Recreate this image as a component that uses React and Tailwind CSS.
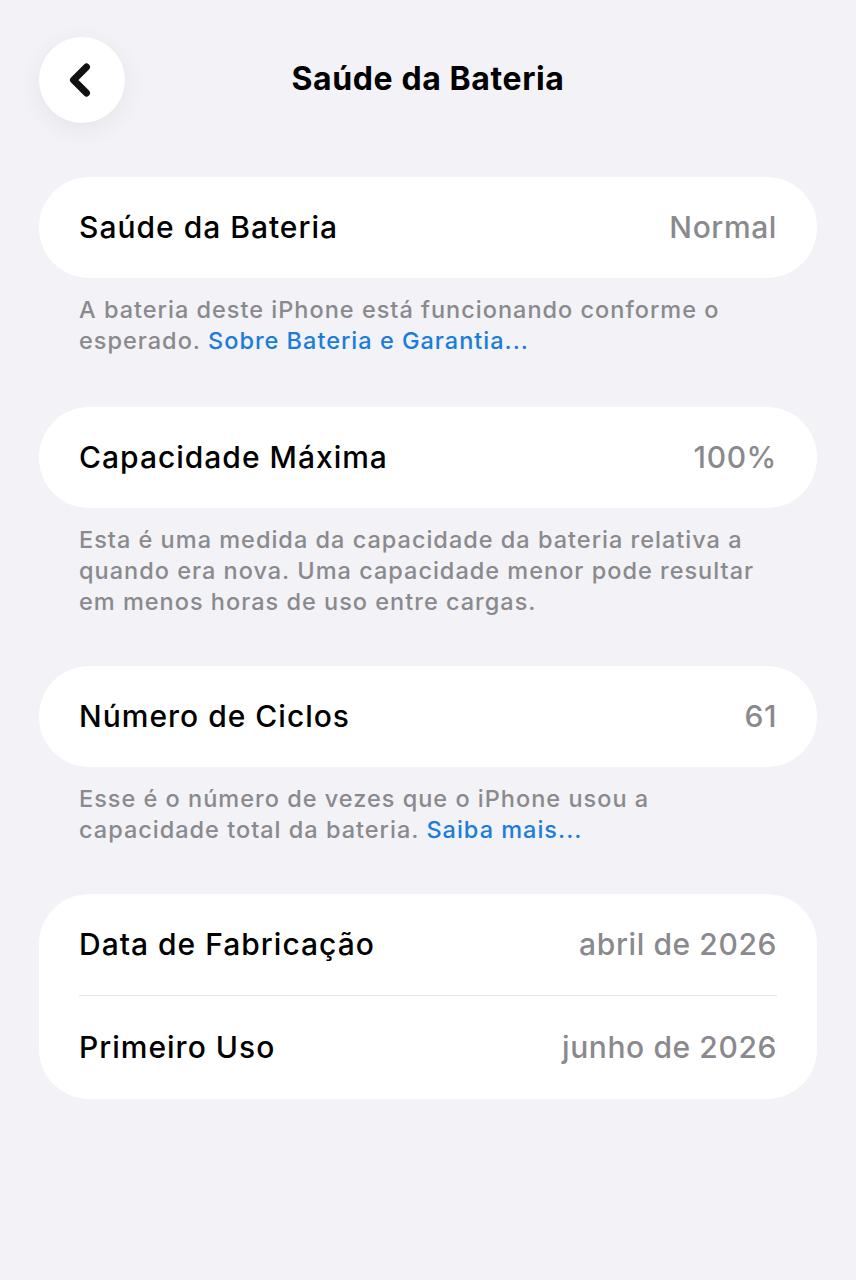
import { ChevronLeft } from 'lucide-react';

function Row({ label, value, tall }) {
  return (
    <div
      className={`flex items-center justify-between px-10 ${tall ? 'h-[103px]' : 'h-[101px]'}`}
    >
      <span className="text-[30px] font-medium tracking-[1px] text-black">{label}</span>
      <span className="text-[30px] font-medium tracking-[0.6px] text-[#8a8a8e]">{value}</span>
    </div>
  );
}

function Footer({ children }) {
  return (
    <p className="mt-4 px-10 text-[23.5px] font-medium leading-[31px] tracking-[1px] text-[#8a8a8e]">
      {children}
    </p>
  );
}

export default function App() {
  return (
    <div
      className="min-h-[1280px] w-full bg-[#f2f2f7]"
      style={{ fontFamily: 'Inter, "Noto Sans", sans-serif' }}
    >
      <div className="relative flex h-[159px] items-center justify-center">
        <button className="absolute left-[39px] top-[37px] flex h-[86px] w-[86px] items-center justify-center rounded-full bg-white shadow-[0_6px_24px_rgba(0,0,0,0.06)]">
          <ChevronLeft size={52} strokeWidth={3.2} className="text-[#111] -ml-1" />
        </button>
        <h1 className="-mt-[1px] text-[32px] font-bold tracking-[0.6px] text-black">
          Saúde da Bateria
        </h1>
      </div>

      <div className="mx-[39px] pt-[18px]">
        <div className="rounded-[50px] bg-white">
          <Row label="Saúde da Bateria" value="Normal" />
        </div>
        <Footer>
          A bateria deste iPhone está funcionando conforme o esperado.{' '}
          <span className="text-[#1a7ddb]">Sobre Bateria e Garantia...</span>
        </Footer>

        <div className="mt-[51px] rounded-[50px] bg-white">
          <Row label="Capacidade Máxima" value="100%" />
        </div>
        <Footer>
          Esta é uma medida da capacidade da bateria relativa a quando era nova. Uma
          capacidade menor pode resultar em menos horas de uso entre cargas.
        </Footer>

        <div className="mt-[49px] rounded-[50px] bg-white">
          <Row label="Número de Ciclos" value="61" />
        </div>
        <Footer>
          Esse é o número de vezes que o iPhone usou a capacidade total da bateria.{' '}
          <span className="text-[#1a7ddb]">Saiba mais...</span>
        </Footer>

        <div className="mt-[49px] rounded-[50px] bg-white">
          <Row label="Data de Fabricação" value="abril de 2026" />
          <div className="mx-10 h-px bg-[#e3e3e8]" />
          <Row label="Primeiro Uso" value="junho de 2026" tall />
        </div>
      </div>
    </div>
  );
}
